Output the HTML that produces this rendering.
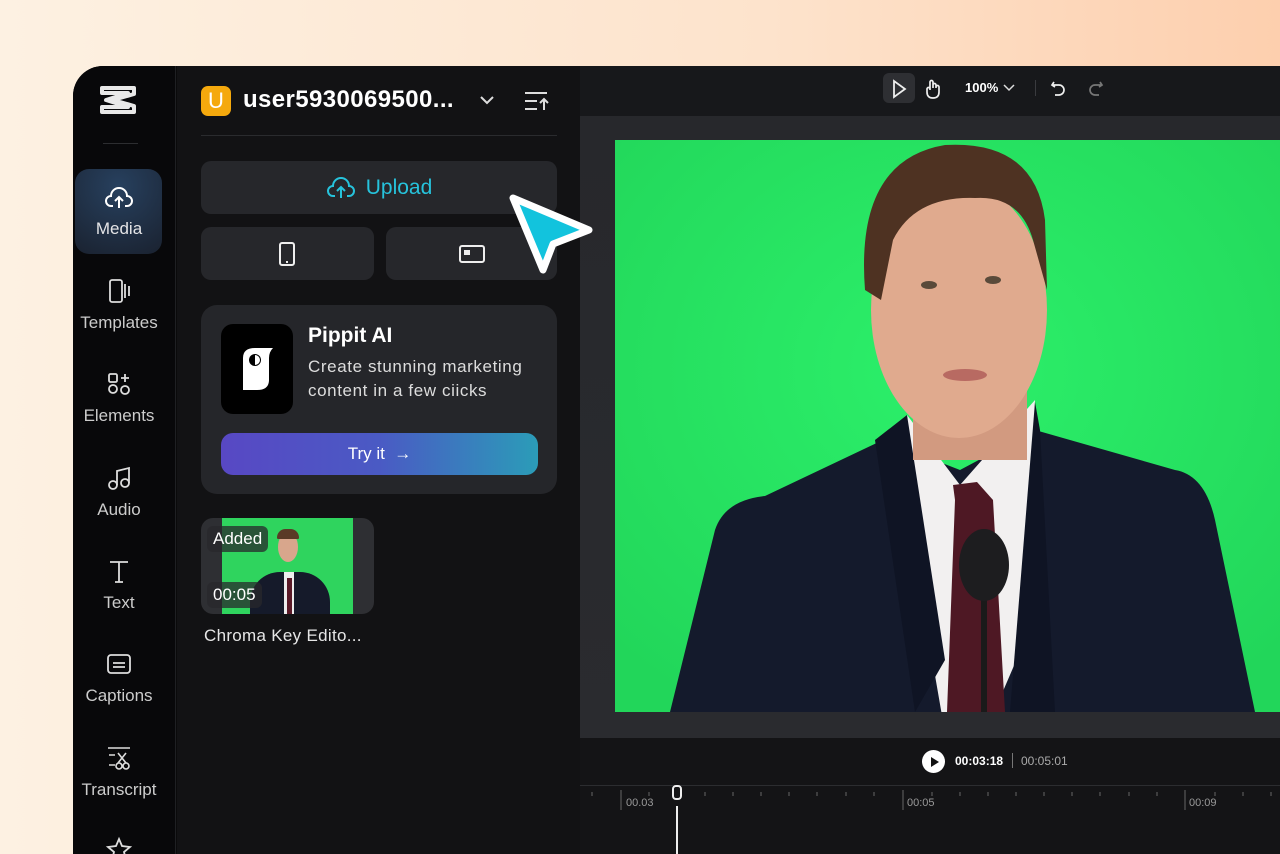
<!DOCTYPE html>
<html><head><meta charset="utf-8"><style>
*{margin:0;padding:0;box-sizing:border-box}
html,body{width:1280px;height:854px;overflow:hidden}
body{position:relative;font-family:"Liberation Sans",sans-serif;background:linear-gradient(90deg,#fdf1e2 0%,#fde3cc 60%,#fdcfae 100%)}
.win{position:absolute;left:73px;top:66px;width:1240px;height:788px;border-radius:30px 30px 0 0;background:#0a0a0b;overflow:hidden}
.abs{position:absolute}
.side{left:0;top:0;width:103px;height:788px;background:#08080a;border-right:1px solid #1f2023}
.nav{position:absolute;left:0;width:92px;text-align:center;color:#e4e4e6;font-size:17px}
.nav svg{display:block;margin:0 auto 9px}
.panel{left:104px;top:0;width:403px;height:788px;background:#121214}
.btn{position:absolute;background:#26272b;border-radius:10px}
.right{left:507px;top:0;width:733px;height:788px;background:#151518}
.w{color:#fff}
</style></head><body>
<div class="win">
 <div class="abs side">
  <svg class="abs" style="left:26px;top:18px" width="40" height="32" viewBox="0 0 40 32"><path d="M3 4h32v6L14 16 35 22v6H3v-5h26L7 16 29 9H3z" fill="none" stroke="#e8e8e8" stroke-width="4" stroke-linejoin="round"/></svg>
  <div class="abs" style="left:30px;top:77px;width:35px;height:1px;background:#2c2d30"></div>
  <div class="abs" style="left:2px;top:103px;width:87px;height:85px;border-radius:14px;background:radial-gradient(circle at 50% 20%,#27405e,#1a2230)"></div>
  <div class="nav" style="top:118px"><svg width="30" height="26" viewBox="0 0 30 26" fill="none" stroke="#fff" stroke-width="2"><path d="M9 22H7a5 5 0 0 1 0-10 8 8 0 0 1 16 0 5 5 0 0 1 0 10h-2"/><path d="M15 24V13M11 17l4-4 4 4"/></svg>Media</div>
  <div class="nav" style="top:212px;color:#ccc"><svg width="30" height="26" viewBox="0 0 30 26" fill="none" stroke="#ddd" stroke-width="1.8"><rect x="6" y="2" width="12" height="22" rx="2"/><path d="M21 6v14M25 8v10"/></svg>Templates</div>
  <div class="nav" style="top:305px;color:#ccc"><svg width="30" height="26" viewBox="0 0 30 26" fill="none" stroke="#ddd" stroke-width="1.8"><rect x="5" y="3" width="8" height="8" rx="1.5"/><path d="M17 7h8M21 3v8"/><circle cx="9" cy="18" r="4"/><circle cx="21" cy="19" r="4"/></svg>Elements</div>
  <div class="nav" style="top:399px;color:#ccc"><svg width="30" height="26" viewBox="0 0 30 26" fill="none" stroke="#ddd" stroke-width="1.8"><circle cx="9" cy="20" r="4"/><circle cx="21" cy="18" r="4"/><path d="M13 20V6l12-3v15"/></svg>Audio</div>
  <div class="nav" style="top:492px;color:#ccc"><svg width="30" height="26" viewBox="0 0 30 26" fill="none" stroke="#ddd" stroke-width="1.8"><path d="M6 4h18M15 4v20M11 24h8"/></svg>Text</div>
  <div class="nav" style="top:585px;color:#ccc"><svg width="30" height="26" viewBox="0 0 30 26" fill="none" stroke="#ddd" stroke-width="1.8"><rect x="4" y="4" width="22" height="18" rx="3"/><path d="M9 12h12M9 16h12"/></svg>Captions</div>
  <div class="nav" style="top:679px;color:#ccc"><svg width="30" height="26" viewBox="0 0 30 26" fill="none" stroke="#ddd" stroke-width="1.6"><path d="M4 3h22M5 10h6M5 20h6M14 8l8 10M22 8l-8 10"/><circle cx="15" cy="21" r="3"/><circle cx="22" cy="21" r="3"/></svg>Transcript</div>
  <svg class="abs" style="left:32px;top:770px" width="28" height="26" viewBox="0 0 28 26" fill="none" stroke="#ddd" stroke-width="1.8"><path d="M14 3l3 7 8 1-6 5 2 8-7-4-7 4 2-8-6-5 8-1z"/></svg>
 </div>
 <div class="abs panel">
  <div class="abs" style="left:24px;top:20px;width:30px;height:30px;border-radius:7px;background:#f5a90d;color:#fff;font-size:22px;text-align:center;line-height:30px">U</div>
  <div class="abs w" style="left:66px;top:20px;font-size:24px;font-weight:bold;letter-spacing:.4px">user5930069500...</div>
  <svg class="abs" style="left:302px;top:28px" width="16" height="12" viewBox="0 0 16 12" fill="none" stroke="#ddd" stroke-width="2"><path d="M2 3l6 6 6-6"/></svg>
  <svg class="abs" style="left:347px;top:24px" width="26" height="22" viewBox="0 0 26 22" fill="none" stroke="#ddd" stroke-width="2"><path d="M1 3h22M1 11h12M1 19h12M20 20V9M16 13l4-4 4 4"/></svg>
  <div class="abs" style="left:24px;top:69px;width:356px;height:1px;background:#2a2b2e"></div>
  <div class="btn" style="left:24px;top:95px;width:356px;height:53px;color:#26c3dc;font-size:21px;line-height:53px;text-align:center"><svg style="vertical-align:-6px;margin-right:10px" width="30" height="26" viewBox="0 0 30 26" fill="none" stroke="#26c3dc" stroke-width="2"><path d="M9 22H7a5 5 0 0 1 0-10 8 8 0 0 1 16 0 5 5 0 0 1 0 10h-2"/><path d="M15 24V13M11 17l4-4 4 4"/></svg>Upload</div>
  <div class="btn" style="left:24px;top:161px;width:173px;height:53px"><svg class="abs" style="left:77px;top:14px" width="18" height="26" viewBox="0 0 18 26" fill="none" stroke="#eee" stroke-width="2"><rect x="2" y="2" width="14" height="22" rx="2"/><path d="M8 21h2"/></svg></div>
  <div class="btn" style="left:209px;top:161px;width:171px;height:53px"><svg class="abs" style="left:72px;top:17px" width="28" height="20" viewBox="0 0 28 20" fill="none" stroke="#eee" stroke-width="2"><rect x="2" y="2" width="24" height="16" rx="2"/><rect x="6" y="6" width="6" height="5" fill="#eee" stroke="none"/></svg></div>
  <div class="abs" style="left:24px;top:239px;width:356px;height:189px;border-radius:16px;background:#25262a">
   <div class="abs" style="left:20px;top:19px;width:72px;height:90px;border-radius:12px;background:#000"><svg class="abs" style="left:18px;top:20px" width="38" height="50" viewBox="0 0 38 50"><path d="M4 14q0-10 12-10h18q-4 4-4 10v22q0 10-12 10H4z" fill="#fff"/><circle cx="16" cy="16" r="6" fill="#000"/><path d="M16 11a5 5 0 0 1 0 10z" fill="#fff"/></svg></div>
   <div class="abs w" style="left:107px;top:19px;font-size:21px;font-weight:bold">Pippit AI</div>
   <div class="abs" style="left:107px;top:50px;font-size:17px;line-height:24px;color:#ddd;letter-spacing:.6px">Create stunning marketing<br>content in a few ciicks</div>
   <div class="abs w" style="left:20px;top:128px;width:317px;height:42px;border-radius:12px;background:linear-gradient(90deg,#5848c4,#4a5ac4 50%,#2b9cb8);text-align:center;line-height:42px;font-size:17px">Try it &nbsp;→</div>
  </div>
  <div class="abs" style="left:24px;top:452px;width:173px;height:96px;border-radius:12px;background:#2e2f33;overflow:hidden">
   <div class="abs" style="left:21px;top:0;width:131px;height:96px;background:#2fd45e;overflow:hidden">
    <div class="abs" style="left:28px;top:54px;width:80px;height:60px;border-radius:30px 30px 0 0;background:#151a2a"></div>
    <div class="abs" style="left:62px;top:54px;width:10px;height:42px;background:#eee"></div>
    <div class="abs" style="left:65px;top:60px;width:5px;height:36px;background:#5a1a28"></div>
    <div class="abs" style="left:56px;top:14px;width:20px;height:30px;border-radius:50%;background:#d8a68c"></div>
    <div class="abs" style="left:55px;top:11px;width:22px;height:10px;border-radius:12px 12px 2px 2px;background:#5a3a26"></div>
   </div>
   <div class="abs w" style="left:6px;top:8px;padding:0 6px;height:26px;border-radius:6px;background:rgba(40,40,44,.75);font-size:17px;line-height:26px">Added</div>
   <div class="abs w" style="left:6px;top:64px;padding:0 6px;height:26px;border-radius:6px;background:rgba(40,40,44,.75);font-size:17px;line-height:26px">00:05</div>
  </div>
  <div class="abs" style="left:27px;top:560px;font-size:17px;color:#e6e6e6;letter-spacing:.3px">Chroma Key Edito...</div>
 </div>
 <div class="abs right">
  <div class="abs" style="left:0;top:0;width:733px;height:50px;background:#17181b"></div>
  <div class="abs" style="left:303px;top:7px;width:32px;height:30px;border-radius:6px;background:#2e2f33"></div>
  <svg class="abs" style="left:311px;top:13px" width="16" height="20" viewBox="0 0 16 20" fill="none" stroke="#eee" stroke-width="1.8"><path d="M3 2v16l11-8z"/></svg>
  <svg class="abs" style="left:344px;top:12px" width="18" height="22" viewBox="0 0 18 22" fill="none" stroke="#eee" stroke-width="1.7"><path d="M6 12V4a1.5 1.5 0 0 1 3 0v6M9 9V7a1.5 1.5 0 0 1 3 0v3M12 9a1.5 1.5 0 0 1 3 0v5q0 6-6 6t-6-6v-3a1.5 1.5 0 0 1 3 0"/></svg>
  <div class="abs w" style="left:385px;top:14px;font-size:13px;font-weight:bold">100%</div>
  <svg class="abs" style="left:423px;top:18px" width="12" height="8" viewBox="0 0 12 8" fill="none" stroke="#ddd" stroke-width="1.5"><path d="M1 1l5 5 5-5"/></svg>
  <div class="abs" style="left:455px;top:14px;width:1px;height:16px;background:#3a3b3f"></div>
  <svg class="abs" style="left:470px;top:13px" width="16" height="18" viewBox="0 0 16 18" fill="none" stroke="#eee" stroke-width="1.7"><path d="M4 3L2 6l3 2M2 6h7a5 5 0 0 1 0 10H5"/></svg>
  <svg class="abs" style="left:508px;top:13px" width="16" height="18" viewBox="0 0 16 18" fill="none" stroke="#777" stroke-width="1.7"><path d="M12 3l2 3-3 2M14 6H7a5 5 0 0 0 0 10h4"/></svg>
  <div class="abs" style="left:0;top:50px;width:733px;height:622px;background:linear-gradient(180deg,#27282c,#2a2b2f)"></div>
  <svg class="abs" style="left:35px;top:74px" width="665" height="572" viewBox="0 0 665 572">
   <defs><radialGradient id="g" cx=".5" cy=".4" r=".7"><stop offset="0" stop-color="#2cf06a"/><stop offset="1" stop-color="#22d65a"/></radialGradient></defs>
   <rect width="665" height="572" fill="url(#g)"/>
   <path d="M55 572L100 390Q110 360 150 356L268 300 345 330 420 290 560 330Q590 335 600 380L640 572z" fill="#141a2c"/>
   <path d="M292 275L345 345 420 260 410 500 370 593 330 593 300 420z" fill="#f2f0f0"/>
   <path d="M338 345L362 342 378 360 390 572 332 572 340 360z" fill="#4e1824"/>
   <path d="M260 300L292 275 330 520 300 572z" fill="#0f1424"/>
   <path d="M425 290L420 262 395 572 440 572z" fill="#0f1424"/>
   <rect x="298" y="240" width="114" height="80" fill="#d29a80"/>
   <ellipse cx="344" cy="170" rx="88" ry="128" fill="#e0aa8e"/>
   <path d="M250 150Q240 20 330 5 420 0 430 80L432 150 418 100Q405 55 360 58 300 56 278 100L266 160z" fill="#4e3222"/>
   <ellipse cx="314" cy="145" rx="8" ry="4" fill="#5a4a3a"/><ellipse cx="378" cy="140" rx="8" ry="4" fill="#5a4a3a"/>
   <ellipse cx="350" cy="235" rx="22" ry="6" fill="#b86a62"/>
   <rect x="366" y="460" width="6" height="112" fill="#1a1a1a"/>
   <ellipse cx="369" cy="425" rx="25" ry="36" fill="#1d1d1f"/>
  </svg>
  <div class="abs" style="left:0;top:672px;width:733px;height:150px;background:#141416"></div>
  <div class="abs" style="left:342px;top:684px;width:23px;height:23px;border-radius:50%;background:#fff"></div>
  <svg class="abs" style="left:350px;top:690px" width="10" height="12" viewBox="0 0 10 12"><path d="M1 1l8 5-8 5z" fill="#111"/></svg>
  <div class="abs w" style="left:375px;top:688px;font-size:12px;font-weight:bold">00:03:18</div>
  <div class="abs" style="left:432px;top:687px;width:1px;height:15px;background:#777"></div>
  <div class="abs" style="left:441px;top:688px;font-size:12px;color:#aaa">00:05:01</div>
  <div class="abs" style="left:0;top:719px;width:733px;height:1px;background:#2c2d30"></div>
  <svg class="abs" style="left:0;top:720px" width="733" height="40"><g stroke="#666" stroke-width="1">
   <path d="M12 6v4M41 4v20M69 6v4M125 6v4M153 6v4M181 6v4M209 6v4M237 6v4M266 6v4M294 6v4M323 4v20M352 6v4M380 6v4M408 6v4M436 6v4M464 6v4M492 6v4M520 6v4M549 6v4M577 6v4M605 4v20M635 6v4M663 6v4M691 6v4M719 6v4"/></g>
   <g fill="#999" font-size="11" font-family="Liberation Sans"><text x="46" y="20">00.03</text><text x="327" y="20">00:05</text><text x="609" y="20">00:09</text></g></svg>
  <div class="abs" style="left:96px;top:740px;width:2px;height:90px;background:#eee"></div>
  <div class="abs" style="left:92px;top:719px;width:10px;height:15px;border:2px solid #eee;border-radius:4px;background:#141416"></div>
 </div>
 <svg class="abs" style="left:430px;top:124px;z-index:10" width="100" height="90" viewBox="0 0 100 90"><path d="M10 8L86 40 50 54 40 80z" fill="#12c3dd" stroke="#fff" stroke-width="7" stroke-linejoin="round"/></svg>
</div>
</body></html>
